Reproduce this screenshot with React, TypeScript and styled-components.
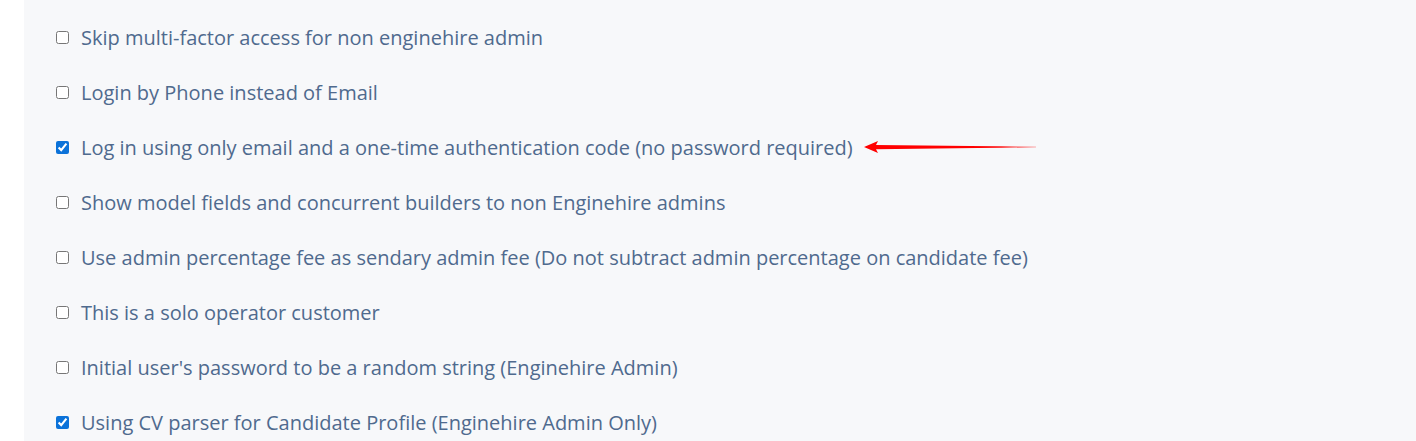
import styled, { createGlobalStyle } from "styled-components";

const GlobalStyle = createGlobalStyle`
  html, body {
    margin: 0;
    padding: 0;
    background: #ffffff;
  }
`;

const Page = styled.div`
  display: flex;
  height: 441px;
  overflow: hidden;
`;

const Panel = styled.div`
  margin-left: 24px;
  flex: 1;
  background: #f7f8fa;
  padding: 25px 0 0 32px;
  display: flex;
  flex-direction: column;
  gap: 31px;
`;

const Row = styled.label`
  display: flex;
  align-items: center;
  height: 24px;
  font-family: "Open Sans", "Noto Sans", sans-serif;
  font-size: 20px;
  color: #4f6a8e;
`;

const Box = styled.input`
  width: 13px;
  height: 13px;
  margin: 0 12px 0 0;
  accent-color: #0b72d9;
`;

const Arrow = styled.svg`
  margin-left: 10px;
  width: 175px;
  height: 14px;
`;

const options = [
  { text: "Skip multi-factor access for non enginehire admin", checked: false },
  { text: "Login by Phone instead of Email", checked: false },
  { text: "Log in using only email and a one-time authentication code (no password required)", checked: true, arrow: true },
  { text: "Show model fields and concurrent builders to non Enginehire admins", checked: false },
  { text: "Use admin percentage fee as sendary admin fee (Do not subtract admin percentage on candidate fee)", checked: false },
  { text: "This is a solo operator customer", checked: false },
  { text: "Initial user's password to be a random string (Enginehire Admin)", checked: false },
  { text: "Using CV parser for Candidate Profile (Enginehire Admin Only)", checked: true },
];

function App() {
  return (
    <Page>
      <GlobalStyle />
      <Panel>
        {options.map((o) => (
          <Row key={o.text}>
            <Box type="checkbox" defaultChecked={o.checked} />
            {o.text}
            {o.arrow && (
              <Arrow viewBox="0 0 175 14">
                <defs>
                  <linearGradient id="tail" x1="0" x2="1" y1="0" y2="0">
                    <stop offset="0" stopColor="#ff0000" />
                    <stop offset="0.8" stopColor="#ff0000" />
                    <stop offset="1" stopColor="#ff0000" stopOpacity="0.3" />
                  </linearGradient>
                </defs>
                <path d="M1 7 L15 1 L13 5 L173 6.6 L173 7.4 L13 9.3 L15 13 Z" fill="url(#tail)" />
              </Arrow>
            )}
          </Row>
        ))}
      </Panel>
    </Page>
  );
}

export default App;
